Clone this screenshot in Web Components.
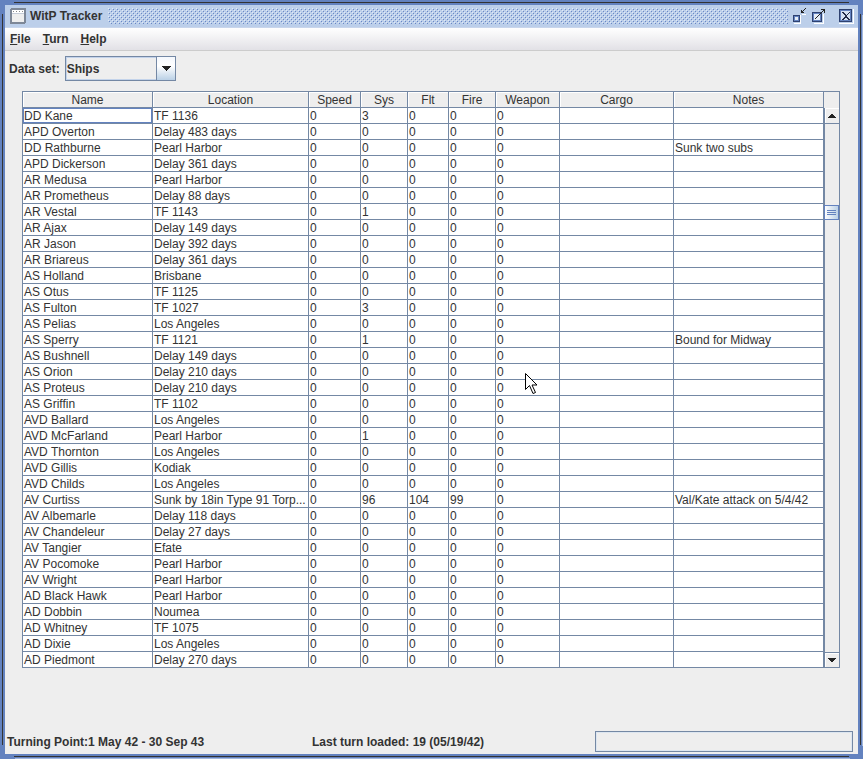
<!DOCTYPE html>
<html lang="en">
<head>
<meta charset="utf-8">
<title>WitP Tracker</title>
<style>
    html, body { height: 100%; margin: 0; }
    body {
        font-family: "Liberation Sans", Arial, sans-serif;
        font-size: 12px;
        color: #333;
        --blue: #6382bf;
        --line: #7488a4;
        --panel: #eee;
    }
</style>
</head>
<body>
<witp-frame title="WitP Tracker">
    <witp-menubar slot="menu" items="File,Turn,Help"></witp-menubar>
    <witp-picker label="Data set:" options="Ships,Air groups,Bases"></witp-picker>
    <witp-ships></witp-ships>
    <witp-status slot="status">
        <span slot="period">Turning Point:1 May 42 - 30 Sep 43</span>
        <span slot="turn">Last turn loaded: 19 (05/19/42)</span>
    </witp-status>
</witp-frame>
<witp-cursor></witp-cursor>

<script>
/**
 * Window frame: title bar, menu slot, content and status slot
 */
class WitpFrame extends HTMLElement {
    constructor() {
        super();
        this.attachShadow({ mode: 'open' });
    }

    connectedCallback() {
        this.shadowRoot.innerHTML = `
            <style>
                :host {
                    display: flex;
                    flex-direction: column;
                    box-sizing: border-box;
                    min-height: 100vh;
                    padding: 5px;
                    background:
                        linear-gradient(#333, #333) 14px 2px / calc(100% - 28px) 1px,
                        linear-gradient(#333, #333) 2px 14px / 1px calc(100% - 28px),
                        linear-gradient(#333, #333) 14px calc(100% - 2px) / calc(100% - 28px) 1px,
                        linear-gradient(#a3b8dc, #a3b8dc) 15px 100% / calc(100% - 28px) 1px,
                        linear-gradient(#333, #333) calc(100% - 2px) 14px / 1px calc(100% - 28px),
                        linear-gradient(#a3b8dc, #a3b8dc) 100% 15px / 1px calc(100% - 28px),
                        var(--blue);
                    background-repeat: no-repeat;
                }
                header {
                    display: flex;
                    align-items: center;
                    height: 22px;
                    padding: 0 4px 0 5px;
                    gap: 4px;
                    background: #bccfea;
                    border-bottom: 1px solid #c9d6ec;
                }
                h1 { margin: 0; font-size: 12px; line-height: 16px; }
                .bumps { flex: 1; height: 16px; margin-left: 2px; }
                .buttons { display: flex; gap: 4px; }
                button { width: 16px; height: 16px; padding: 0; border: 0; background: none; }
                button:last-child { margin-left: 6px; }
                svg { display: block; }
                main { flex: 1; background: var(--panel); }
            </style>
            <header>
                <svg width="16" height="16" shape-rendering="crispEdges">
                    <rect x="1" y="1" width="14" height="14" rx="1" fill="#eee" stroke="#7d8797" stroke-width="2"/>
                    <path d="M2 2h12v4H2z" fill="#fff"/>
                    <path d="M3 3.5h11" stroke="#888" stroke-dasharray="1 2"/>
                    <path d="M2 5.5h12" stroke="#c5ccd8"/>
                </svg>
                <h1>${this.getAttribute('title')}</h1>
                <svg class="bumps" shape-rendering="crispEdges" aria-hidden="true">
                    <defs>
                        <pattern id="dots" width="4" height="4" patternUnits="userSpaceOnUse">
                            <path d="M0 0h1v1H0zM2 2h1v1H2z" fill="#dfe9f7"/>
                            <path d="M1 1h1v1H1zM3 3h1v1H3z" fill="#6a88c6"/>
                        </pattern>
                    </defs>
                    <rect width="100%" height="100%" fill="url(#dots)"/>
                </svg>
                <div class="buttons">
                    <button aria-label="Minimize"><svg width="16" height="16" shape-rendering="crispEdges">
                        <path d="M8.500 7v8.500H2" fill="none" stroke="#fff"/>
                        <path d="M1.500 7.500h6v6h-6z" fill="#e4ecf7" stroke="#2e4170"/>
                        <path d="M2.500 8.500h4v4h-4z" fill="none" stroke="#6382bf"/>
                        <path d="M9 2h1v2h2v1H9zM10 3h1v1h-1zM11 2h1v1h-1zM12 1h1v1h-1zM13 0h1v1h-1z" fill="#222"/>
                        <path d="M10 6h4v1h-4z" fill="#fff"/>
                    </svg></button>
                    <button aria-label="Maximize"><svg width="16" height="16" shape-rendering="crispEdges">
                        <path d="M11.500 6v9.500H2" fill="none" stroke="#fff"/>
                        <path d="M.5 4.500h9v9h-9z" fill="#e4ecf7" stroke="#2e4170"/>
                        <path d="M1.500 5.500h7v7h-7z" fill="none" stroke="#6382bf"/>
                        <path d="M3 10h1v1H3zM4 9h1v1H4zM5 8h1v1H5zM6 7h1v1H6zM7 6h1v1H7zM8 5h1v1H8zM9 4h1v1H9zM10 3h1v1h-1zM11 2h1v1h-1zM9 1h4v4h-1V2H9z" fill="#222"/>
                    </svg></button>
                    <button aria-label="Close"><svg width="16" height="16" shape-rendering="crispEdges">
                        <path d="M1 15.500h14.500V1" fill="none" stroke="#fff"/>
                        <path d="M1.500 1.500h12v12h-12z" fill="#d5e2f3" stroke="#2e4170"/>
                        <path d="M2.500 2.500h10v10h-10z" fill="none" stroke="#6382bf"/>
                        <path d="M4 4h2v1h1v1h1v1h1V6h1V5h1V4h1v1h-1v1h-1v1H9v2h1v1h1v1h1v1h-2v-1H9v-1H7v1H6v1H4v-1h1v-1h1V9h1V7H6V6H5V5H4z" fill="#222b48"/>
                    </svg></button>
                </div>
            </header>
            <slot name="menu"></slot>
            <main><slot></slot></main>
            <slot name="status"></slot>
        `;
    }
}

class WitpMenubar extends HTMLElement {
    constructor() {
        super();
        this.attachShadow({ mode: 'open' });
    }

    connectedCallback() {
        const items = this.getAttribute('items').split(',');
        this.shadowRoot.innerHTML = `
            <style>
                :host {
                    display: flex;
                    gap: 12px;
                    height: 22px;
                    padding: 0 5px;
                    background: linear-gradient(#fff, #e2e1e6);
                    border-bottom: 1px solid #ccc;
                }
                button {
                    padding: 0;
                    border: 0;
                    background: none;
                    color: inherit;
                    font: bold 12px "Liberation Sans", Arial, sans-serif;
                }
            </style>
            ${items.map(t => `<button><u>${t[0]}</u>${t.slice(1)}</button>`).join('')}
        `;
    }
}

class WitpPicker extends HTMLElement {
    constructor() {
        super();
        this.attachShadow({ mode: 'open' });
    }

    connectedCallback() {
        const options = this.getAttribute('options').split(',');
        this.shadowRoot.innerHTML = `
            <style>
                :host { display: flex; align-items: center; gap: 5px; padding: 5px 4px; font-weight: bold; }
                .box { display: grid; grid-template-columns: 1fr 20px; width: 111px; height: 25px; }
                select {
                    grid-area: 1 / 1 / 2 / 3;
                    appearance: none;
                    padding: 0 1px;
                    border: 1px solid var(--line);
                    border-radius: 0;
                    background: var(--panel);
                    box-shadow: inset 0 0 0 1px #c3d3ea;
                    color: inherit;
                    font: inherit;
                }
                svg { grid-area: 1 / 2; pointer-events: none; }
            </style>
            <label for="set">${this.getAttribute('label')}</label>
            <div class="box">
                <select id="set">${options.map(o => `<option>${o}</option>`).join('')}</select>
                <svg width="20" height="25" shape-rendering="crispEdges">
                    <defs><linearGradient id="g" x2="0" y2="1"><stop stop-color="#f4f8fd"/><stop offset=".4" stop-color="#fff"/><stop offset="1" stop-color="#b8cfe5"/></linearGradient></defs>
                    <path d="M.5 .5h19v24H.5z" fill="url(#g)" stroke="#7488a4"/>
                    <path d="M5 10h10l-5 5z" fill="#222"/>
                </svg>
            </div>
        `;
    }
}

// name, location, sys, notes, flt, fire
const SHIPS = [
    ['DD Kane', 'TF 1136', 3],
    ['APD Overton', 'Delay 483 days'],
    ['DD Rathburne', 'Pearl Harbor', 0, 'Sunk two subs'],
    ['APD Dickerson', 'Delay 361 days'],
    ['AR Medusa', 'Pearl Harbor'],
    ['AR Prometheus', 'Delay 88 days'],
    ['AR Vestal', 'TF 1143', 1],
    ['AR Ajax', 'Delay 149 days'],
    ['AR Jason', 'Delay 392 days'],
    ['AR Briareus', 'Delay 361 days'],
    ['AS Holland', 'Brisbane'],
    ['AS Otus', 'TF 1125'],
    ['AS Fulton', 'TF 1027', 3],
    ['AS Pelias', 'Los Angeles'],
    ['AS Sperry', 'TF 1121', 1, 'Bound for Midway'],
    ['AS Bushnell', 'Delay 149 days'],
    ['AS Orion', 'Delay 210 days'],
    ['AS Proteus', 'Delay 210 days'],
    ['AS Griffin', 'TF 1102'],
    ['AVD Ballard', 'Los Angeles'],
    ['AVD McFarland', 'Pearl Harbor', 1],
    ['AVD Thornton', 'Los Angeles'],
    ['AVD Gillis', 'Kodiak'],
    ['AVD Childs', 'Los Angeles'],
    ['AV Curtiss', 'Sunk by 18in Type 91 Torp...', 96, 'Val/Kate attack on 5/4/42', 104, 99],
    ['AV Albemarle', 'Delay 118 days'],
    ['AV Chandeleur', 'Delay 27 days'],
    ['AV Tangier', 'Efate'],
    ['AV Pocomoke', 'Pearl Harbor'],
    ['AV Wright', 'Pearl Harbor'],
    ['AD Black Hawk', 'Pearl Harbor'],
    ['AD Dobbin', 'Noumea'],
    ['AD Whitney', 'TF 1075'],
    ['AD Dixie', 'Los Angeles'],
    ['AD Piedmont', 'Delay 270 days']
];

const COLUMNS = [['Name', 130], ['Location', 156], ['Speed', 52], ['Sys', 47], ['Flt', 41], ['Fire', 47], ['Weapon', 64], ['Cargo', 114], ['Notes', 0]];

class WitpShips extends HTMLElement {
    constructor() {
        super();
        this.attachShadow({ mode: 'open' });
    }

    connectedCallback() {
        const cols = COLUMNS.map(([, w]) => w ? `<col style="width:${w}px">` : '<col>').join('');
        const rows = SHIPS.map(([name, place, sys = 0, notes = '', flt = 0, fire = 0]) =>
            `<tr>${[name, place, 0, sys, flt, fire, 0, '', notes].map(v => `<td>${v}</td>`).join('')}</tr>`
        ).join('');

        this.shadowRoot.innerHTML = `
            <style>
                :host {
                    display: flex;
                    margin: 5px 18px 0 17px;
                    border: 1px solid var(--line);
                }
                table {
                    flex: 1;
                    width: 0;
                    table-layout: fixed;
                    border-collapse: separate;
                    border-spacing: 0;
                    background: #fff;
                }
                th, td {
                    box-sizing: border-box;
                    height: 16px;
                    padding: 1px 1px 0;
                    border-right: 1px solid var(--line);
                    border-bottom: 1px solid var(--line);
                    line-height: 14px;
                    font-weight: normal;
                    text-align: left;
                    white-space: nowrap;
                    overflow: hidden;
                }
                th { padding-top: 2px; line-height: 13px; background: var(--panel); text-align: center; box-shadow: inset 1px 1px #fff; }
                tr:last-child td { height: 15px; border-bottom: 0; }
                thead th { border-bottom: 1px solid var(--line); }
                td.focus { box-shadow: inset 0 0 0 1px var(--blue); }
            </style>
            <table>
                <colgroup>${cols}</colgroup>
                <thead><tr>${COLUMNS.map(([t]) => `<th>${t}</th>`).join('')}</tr></thead>
                <tbody>${rows}</tbody>
            </table>
            <witp-scrollbar></witp-scrollbar>
        `;
        this.shadowRoot.querySelector('td').className = 'focus';
    }
}

class WitpScrollbar extends HTMLElement {
    constructor() {
        super();
        this.attachShadow({ mode: 'open' });
    }

    connectedCallback() {
        this.shadowRoot.innerHTML = `
            <style>
                :host { display: flex; flex-direction: column; width: 15px; background: var(--panel); }
                .corner { height: 15px; border-bottom: 1px solid var(--panel); }
                button {
                    height: 16px;
                    padding: 0;
                    border: solid var(--line);
                    border-width: 0 0 1px 1px;
                    background: var(--panel);
                    box-shadow: inset 1px 1px #fff;
                }
                button:last-child { height: 15px; border-width: 1px 0 0 1px; }
                .track { flex: 1; display: grid; grid-template-rows: 81fr 15px 432fr; border-left: 1px solid var(--line); }
                .thumb { grid-row: 2; margin-left: -1px; }
                svg { display: block; }
            </style>
            <div class="corner"></div>
            <button aria-label="Scroll up"><svg width="14" height="15" shape-rendering="crispEdges"><path d="M2 10l4-4h1l4 4z" fill="#222"/></svg></button>
            <div class="track">
                <svg class="thumb" width="15" height="15" shape-rendering="crispEdges">
                    <defs><linearGradient id="t"><stop stop-color="#fff"/><stop offset="1" stop-color="#b8cfe5"/></linearGradient></defs>
                    <path d="M.5 .5h14v14H.5z" fill="url(#t)" stroke="#6382bf"/>
                    <path d="M3 5.5h9M3 7.5h9M3 9.5h9" stroke="#6382bf"/>
                </svg>
            </div>
            <button aria-label="Scroll down"><svg width="14" height="14" shape-rendering="crispEdges"><path d="M2 5h9l-4 4H6z" fill="#222"/></svg></button>
        `;
    }
}

class WitpStatus extends HTMLElement {
    constructor() {
        super();
        this.attachShadow({ mode: 'open' });
    }

    connectedCallback() {
        this.shadowRoot.innerHTML = `
            <style>
                :host {
                    display: grid;
                    grid-template-columns: 305fr 283fr 258fr;
                    align-items: center;
                    padding: 0 5px 2px 2px;
                    background: var(--panel);
                    font-weight: bold;
                }
                .progress { height: 19px; border: 1px solid var(--line); box-shadow: inset 0 0 0 1px #dde6f0; }
            </style>
            <slot name="period"></slot>
            <slot name="turn"></slot>
            <div class="progress" role="progressbar" aria-label="Load progress"></div>
        `;
    }
}

// Mouse pointer lying over the table
class WitpCursor extends HTMLElement {
    constructor() {
        super();
        this.attachShadow({ mode: 'open' });
    }

    connectedCallback() {
        this.shadowRoot.innerHTML = `
            <style>
                :host { position: absolute; left: 525px; top: 373px; pointer-events: none; }
                svg { display: block; }
            </style>
            <svg width="13" height="22">
                <path d="M.5 .5v16l4-4 3.5 8 2.500-1-3.500-7.500h5z" fill="#fff" stroke="#000"/>
            </svg>
        `;
    }
}

customElements.define('witp-frame', WitpFrame);
customElements.define('witp-menubar', WitpMenubar);
customElements.define('witp-picker', WitpPicker);
customElements.define('witp-scrollbar', WitpScrollbar);
customElements.define('witp-ships', WitpShips);
customElements.define('witp-status', WitpStatus);
customElements.define('witp-cursor', WitpCursor);
</script>
</body>
</html>
